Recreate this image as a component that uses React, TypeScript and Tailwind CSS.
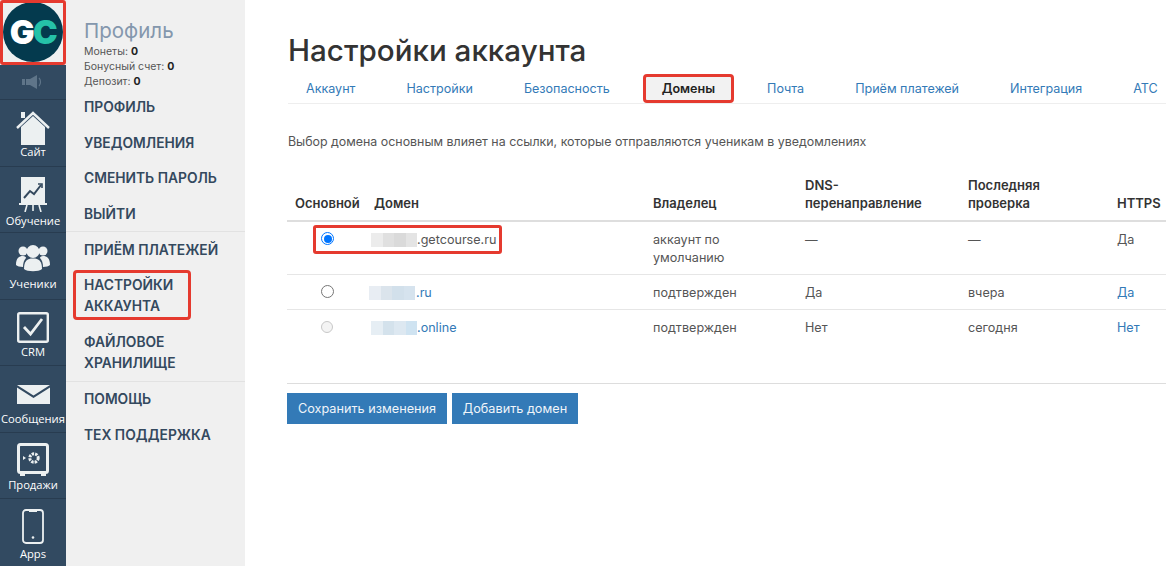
import React from "react";

const railIcon = "#ecf0f1";

function Logo() {
  return (
    <div className="relative h-[65px] w-[66px] bg-[#eef0f0] flex items-start justify-center pt-[2px]">
      <div className="h-[60px] w-[60px] rounded-full bg-[#043a4e] flex items-center justify-center font-['Inter'] font-black text-[33px] leading-none tracking-[-1.5px]">
        <span className="text-white">G</span>
        <span className="text-[#25c2a8]">C</span>
      </div>
      <div className="absolute inset-0 border-[3px] border-[#e53a2f] rounded-[3px]" />
    </div>
  );
}

const Home = () => (
  <svg width="34" height="36" viewBox="0 0 34 36" fill="none">
    <path d="M5 17 L5 35 L29 35 L29 17 L17 6 Z" fill={railIcon} />
    <path d="M1 18 L17 3 L33 18" stroke={railIcon} strokeWidth="2.4" />
    <rect x="5" y="2" width="4" height="6" fill={railIcon} />
  </svg>
);
const Board = () => (
  <svg width="28" height="36" viewBox="0 0 28 36" fill="none">
    <rect x="2" y="1" width="24" height="26" fill={railIcon} />
    <path d="M5 22 L11 15 L15 18 L22 9" stroke="#34495e" strokeWidth="2" />
    <path d="M19 8 L23 8 L23 12" stroke="#34495e" strokeWidth="1.6" />
    <rect x="0" y="27" width="28" height="2" fill={railIcon} />
    <path d="M8 29 L6 36 M20 29 L22 36 M14 29 L14 35" stroke={railIcon} strokeWidth="1.6" />
  </svg>
);
const Users = () => (
  <svg width="34" height="29" viewBox="0 0 34 29" fill={railIcon}>
    <circle cx="7" cy="7" r="4.5" />
    <circle cx="27" cy="7" r="4.5" />
    <path d="M0 21 C0 14 3 12 7 12 C9 12 10 13 10 14 C8 16 7 19 7 23 C4 23 1 22 0 21 Z" />
    <path d="M34 21 C34 14 31 12 27 12 C25 12 24 13 24 14 C26 16 27 19 27 23 C30 23 33 22 34 21 Z" />
    <circle cx="17" cy="7.5" r="6.5" />
    <path d="M8 25 C8 17 11 14.5 17 14.5 C23 14.5 26 17 26 25 C23 28 11 28 8 25 Z" />
  </svg>
);
const Crm = () => (
  <svg width="32" height="31" viewBox="0 0 32 31" fill="none">
    <rect x="1.2" y="1.2" width="29.6" height="28.6" rx="1.5" stroke={railIcon} strokeWidth="2.4" />
    <path d="M7 15 L13.5 22 L25 7" stroke={railIcon} strokeWidth="2.8" />
  </svg>
);
const Mail = () => (
  <svg width="33" height="19" viewBox="0 0 33 19" fill={railIcon}>
    <path d="M0 0 H33 L16.5 10.5 Z" />
    <path d="M0 2.5 L16.5 13 L33 2.5 V19 H0 Z" />
  </svg>
);
const Safe = () => (
  <svg width="32" height="33" viewBox="0 0 32 33" fill="none">
    <rect x="1.5" y="1.5" width="29" height="28" rx="2" stroke={railIcon} strokeWidth="3" />
    <circle cx="17" cy="15" r="4.2" stroke={railIcon} strokeWidth="3" strokeDasharray="2.4 1" />
    <path d="M6 13 L9 15 L6 17 Z" fill={railIcon} />
    <rect x="3" y="30" width="5" height="3" fill={railIcon} />
    <rect x="24" y="30" width="5" height="3" fill={railIcon} />
  </svg>
);
const Phone = () => (
  <svg width="22" height="35" viewBox="0 0 22 35" fill="none">
    <rect x="1" y="1" width="20" height="33" rx="3" stroke={railIcon} strokeWidth="1.8" />
    <rect x="7" y="1" width="8" height="2" fill={railIcon} />
    <circle cx="11" cy="28.5" r="1.3" fill={railIcon} />
  </svg>
);
const Speaker = () => (
  <svg width="22" height="14" viewBox="0 0 22 14" fill="#5f7589">
    <rect x="0" y="4" width="3" height="6" />
    <rect x="4" y="4" width="4" height="6" />
    <path d="M8 4 L15 0 V14 L8 10 Z" />
    <path d="M17 3 C19 5 19 9 17 11" stroke="#5f7589" strokeWidth="1.2" fill="none" />
  </svg>
);

function RailItem({
  icon,
  label,
  top,
  last,
  labelClass,
}: {
  icon: React.ReactNode;
  label: string;
  top: string;
  last?: boolean;
  labelClass: string;
}) {
  return (
    <div className={`h-[66.5px] flex flex-col items-center ${top} ${last ? "" : "border-b border-[#283c50]"}`}>
      <div className="flex items-center justify-center">{icon}</div>
      <div className={`font-['Open_Sans'] text-[11.2px] font-medium leading-[16px] text-white whitespace-nowrap ${labelClass}`}>
        {label}
      </div>
    </div>
  );
}

function Rail() {
  return (
    <div className="w-[66px] shrink-0 bg-[#324a61] flex flex-col h-[566px] overflow-hidden">
      <Logo />
      <div className="h-[35px] flex items-center justify-center border-b border-[#283c50]">
        <Speaker />
      </div>
      <RailItem icon={<Home />} label="Сайт" top="pt-[10px]" labelClass="mt-[-2px]" />
      <RailItem icon={<Board />} label="Обучение" top="pt-[9px]" labelClass="mt-[1px]" />
      <RailItem icon={<Users />} label="Ученики" top="pt-[11px]" labelClass="mt-[3px]" />
      <RailItem icon={<Crm />} label="CRM" top="pt-[12px]" labelClass="mt-[1px]" />
      <RailItem icon={<Mail />} label="Сообщения" top="pt-[19px]" labelClass="mt-[7px]" />
      <RailItem icon={<Safe />} label="Продажи" top="pt-[10px]" labelClass="mt-[1px]" />
      <RailItem icon={<Phone />} label="Apps" top="pt-[10px]" last labelClass="mt-[2px]" />
    </div>
  );
}

function NavLink({ children }: { children: React.ReactNode }) {
  return <div className="relative pl-[18px] text-[13.8px] leading-[21px] font-semibold text-[#34495e]">{children}</div>;
}

function SubMenu() {
  return (
    <div className="w-[179px] shrink-0 bg-[#f0f0f0] h-[566px] font-['Inter']">
      <div className="pt-[18px] pl-[18px]">
        <div className="text-[20.5px] leading-[25px] text-[#8497ad]">Профиль</div>
        <div className="mt-[1px] text-[10.5px] leading-[15px] text-[#555]">
          <div>
            Монеты: <b className="text-[#222]">0</b>
          </div>
          <div>
            Бонусный счет: <b className="text-[#222]">0</b>
          </div>
          <div>
            Депозит: <b className="text-[#222]">0</b>
          </div>
        </div>
      </div>
      <div className="mt-[8px] flex flex-col gap-[14.7px]">
        <NavLink>ПРОФИЛЬ</NavLink>
        <NavLink>УВЕДОМЛЕНИЯ</NavLink>
        <NavLink>СМЕНИТЬ ПАРОЛЬ</NavLink>
        <NavLink>ВЫЙТИ</NavLink>
      </div>
      <div className="mt-[6px] border-t border-[#e2e2e2] pt-[7.5px] flex flex-col gap-[14.7px]">
        <NavLink>ПРИЁМ ПЛАТЕЖЕЙ</NavLink>
        <NavLink>
          НАСТРОЙКИ
          <br />
          АККАУНТА
          <div className="absolute left-[7px] top-[-5px] w-[118px] h-[50px] border-[3px] border-[#e53a2f] rounded-[4px]" />
        </NavLink>
        <NavLink>
          ФАЙЛОВОЕ
          <br />
          ХРАНИЛИЩЕ
        </NavLink>
      </div>
      <div className="mt-[7px] border-t border-[#e2e2e2] pt-[7px] flex flex-col gap-[14.7px]">
        <NavLink>ПОМОЩЬ</NavLink>
        <NavLink>ТЕХ ПОДДЕРЖКА</NavLink>
      </div>
    </div>
  );
}

const tabs = ["Аккаунт", "Настройки", "Безопасность", "Домены", "Почта", "Приём платежей", "Интеграция", "АТС"];

function Tabs() {
  return (
    <div className="mt-[5px] flex gap-[15px] border-b border-[#eee] h-[30px] w-[878px]">
      {tabs.map((t) =>
        t === "Домены" ? (
          <div
            key={t}
            className="h-[29px] px-[16px] border-[3px] border-[#e53a2f] rounded-[4px] bg-[#f2f2f2] text-[12.55px] leading-[23px] font-semibold text-[#222] whitespace-nowrap"
          >
            {t}
          </div>
        ) : (
          <div key={t} className="h-[29px] px-[18px] text-[12.55px] leading-[29px] text-[#337ab7] whitespace-nowrap">
            {t}
          </div>
        )
      )}
    </div>
  );
}

function Blur({ colors }: { colors: string[] }) {
  return (
    <span className="inline-flex align-middle h-[14px] -mt-[2px]">
      {colors.map((c, i) => (
        <span key={i} className="block h-full w-[11.5px]" style={{ backgroundColor: c }} />
      ))}
    </span>
  );
}

function Radio({ state }: { state: "on" | "off" | "disabled" }) {
  if (state === "on")
    return (
      <span className="block w-[13px] h-[13px] rounded-full border-[1.5px] border-[#0075ff] p-[1.5px]">
        <span className="block w-full h-full rounded-full bg-[#0075ff]" />
      </span>
    );
  if (state === "off") return <span className="block w-[13px] h-[13px] rounded-full border border-[#767676] bg-white" />;
  return <span className="block w-[12px] h-[12px] rounded-full border border-[#c8c8c8] bg-[#f4f4f4]" />;
}

function DomainTable() {
  const th = "px-2 pb-[8px] pt-0 align-bottom text-left text-[13px] leading-[18px] font-semibold text-[#333]";
  const tdBase = "px-2 pt-[9px] pb-[7px] align-top text-[12.6px] leading-[18px]";
  const td = `${tdBase} text-[#555]`;
  const tdLink = `${tdBase} text-[#337ab7]`;
  const rowB = "border-b border-[#e6e6e6]";
  return (
    <table className="mt-[25px] table-fixed w-[881px] -ml-px border-collapse">
      <colgroup>
        <col className="w-[79px]" />
        <col className="w-[279px]" />
        <col className="w-[152px]" />
        <col className="w-[163px]" />
        <col className="w-[149px]" />
        <col className="w-[59px]" />
      </colgroup>
      <thead>
        <tr className="border-b-2 border-[#dedede]">
          <th className={th}>Основной</th>
          <th className={th}>Домен</th>
          <th className={th}>Владелец</th>
          <th className={th}>
            DNS-
            <br />
            перенаправление
          </th>
          <th className={th}>
            Последняя
            <br />
            проверка
          </th>
          <th className={th}>HTTPS</th>
        </tr>
      </thead>
      <tbody>
        <tr className={rowB}>
          <td className={td}>
            <div className="pl-[26px] pt-[1px]">
              <Radio state="on" />
            </div>
          </td>
          <td className={td}>
            <div className="relative -ml-[3px] whitespace-nowrap">
              <Blur colors={["#ececec", "#e0e0e0", "#dadada", "#e4e4e4"]} />
              <span>.getcourse.ru</span>
              <div className="absolute left-[-58px] top-[-6px] w-[189px] h-[29px] border-[3px] border-[#e53a2f] rounded-[3px]" />
            </div>
          </td>
          <td className={td}>
            аккаунт по
            <br />
            умолчанию
          </td>
          <td className={td}>—</td>
          <td className={td}>—</td>
          <td className={td}>Да</td>
        </tr>
        <tr className={rowB}>
          <td className={td}>
            <div className="pl-[26px] pt-[1px]">
              <Radio state="off" />
            </div>
          </td>
          <td className={tdLink}>
            <div className="-ml-[5px] whitespace-nowrap">
              <Blur colors={["#e8edf3", "#dbe4ec", "#d2e0eb", "#d6e3ee"]} />
              <span className="ml-[1px]">.ru</span>
            </div>
          </td>
          <td className={td}>подтвержден</td>
          <td className={td}>Да</td>
          <td className={td}>вчера</td>
          <td className={tdLink}>Да</td>
        </tr>
        <tr>
          <td className={td}>
            <div className="pl-[26px] pt-[2px]">
              <Radio state="disabled" />
            </div>
          </td>
          <td className={tdLink}>
            <div className="-ml-[3px] whitespace-nowrap">
              <Blur colors={["#e6eef4", "#d4e2ec", "#dde8f1", "#cfe3f1"]} />
              <span>.online</span>
            </div>
          </td>
          <td className={td}>подтвержден</td>
          <td className={td}>Нет</td>
          <td className={td}>сегодня</td>
          <td className={tdLink}>Нет</td>
        </tr>
      </tbody>
    </table>
  );
}

export default function App() {
  return (
    <div className="flex h-[566px] w-[1166px] overflow-hidden bg-white font-['Inter',sans-serif]">
      <Rail />
      <SubMenu />
      <main className="pl-[43px] pt-[31px] min-w-0 flex-1">
        <h1 className="text-[29.6px] leading-[38px] font-medium text-[#333]">Настройки аккаунта</h1>
        <Tabs />
        <p className="mt-[29px] text-[12.4px] leading-[18px] text-[#555]">
          Выбор домена основным влияет на ссылки, которые отправляются ученикам в уведомлениях
        </p>
        <DomainTable />
        <div className="mt-[39px] -ml-px w-[881px] border-t border-[#ddd] pt-[9px] flex gap-[5px]">
          <button className="h-[31px] w-[160px] bg-[#337ab7] text-[12.7px] text-[#f0f5fa]">Сохранить изменения</button>
          <button className="h-[31px] w-[126px] bg-[#337ab7] text-[12.7px] text-[#f0f5fa]">Добавить домен</button>
        </div>
      </main>
    </div>
  );
}
